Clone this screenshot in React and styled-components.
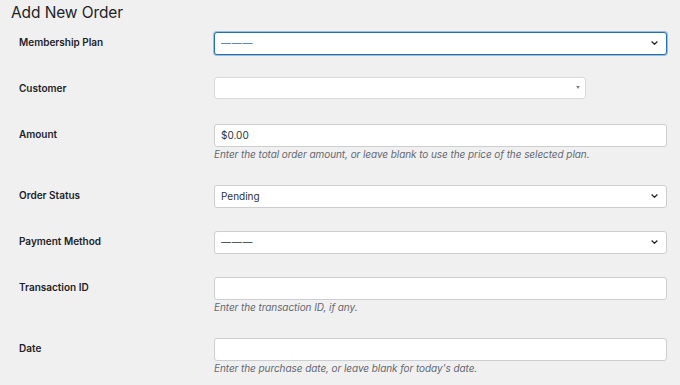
import styled, { createGlobalStyle } from "styled-components";

const GlobalStyle = createGlobalStyle`
  body {
    margin: 0;
    background: #f0f0f1;
    font-family: Inter, "Noto Sans", sans-serif;
    color: #1d2327;
  }
`;

const Wrap = styled.div`
  padding: 6px 0 0 11px;
  width: 680px;
  box-sizing: border-box;
`;

const Title = styled.h1`
  margin: 0;
  font-size: 15.5px;
  line-height: 14px;
  font-weight: 400;
  letter-spacing: -0.1px;
  color: #1d2327;
`;

const Form = styled.div`
  padding-left: 8px;
`;

const Row = styled.div`
  display: grid;
  grid-template-columns: 195px 453px;
  padding: 11px 0 12px;
`;

const Label = styled.label`
  font-size: 10px;
  font-weight: 600;
  line-height: 23px;
  color: #1d2327;
`;

const Field = styled.div`
  display: flex;
  flex-direction: column;
  align-items: flex-start;
`;

const Box = styled.div`
  position: relative;
  width: ${(p) => p.$width || 453}px;
  height: 23px;
`;

const TextInput = styled.input`
  box-sizing: border-box;
  width: 100%;
  height: 23px;
  margin: 0;
  padding: 0 6px;
  border: 1px solid #cdced1;
  border-radius: 3px;
  background: #fff;
  font: 400 10px Inter, "Noto Sans", sans-serif;
  color: #2c3338;
  outline: none;
`;

const Select = styled.select`
  box-sizing: border-box;
  width: 100%;
  height: 23px;
  margin: 0;
  padding: 0 20px 0 6px;
  appearance: none;
  border: 1px solid ${(p) => (p.$focus ? "#2271b1" : "#cdced1")};
  box-shadow: ${(p) => (p.$focus ? "0 0 0 1px rgba(34,113,177,0.4)" : "none")};
  border-radius: 3px;
  background: #fff;
  font: 400 10px Inter, "Noto Sans", sans-serif;
  letter-spacing: ${(p) => (p.$dashes ? "0.8px" : "0")};
  color: ${(p) => (p.$focus ? "#3e6a9a" : "#2c3338")};
  outline: none;
`;

const Chevron = styled.svg`
  position: absolute;
  right: 9px;
  top: 10px;
  pointer-events: none;
`;

const Combo = styled.div`
  box-sizing: border-box;
  width: 100%;
  height: 22px;
  border: 1px solid #d8d9db;
  border-radius: 3px;
  background: #fff;
`;

const Caret = styled.span`
  position: absolute;
  right: 6px;
  top: 9px;
  width: 0;
  height: 0;
  border-left: 2.5px solid transparent;
  border-right: 2.5px solid transparent;
  border-top: 3.5px solid #888;
`;

const Hint = styled.p`
  margin: 2px 0 0;
  font-size: 10px;
  line-height: 13px;
  letter-spacing: -0.07px;
  font-style: italic;
  color: #646970;
`;

function DropSelect({ value, focus }) {
  return (
    <Box>
      <Select $focus={focus} $dashes={value === "———"} defaultValue={value}>
        <option>{value}</option>
      </Select>
      <Chevron width="7" height="4" viewBox="0 0 7 4">
        <path d="M0.6 0.5 L3.5 3.3 L6.4 0.5" fill="none" stroke="#1d2327" strokeWidth="1.2" />
      </Chevron>
    </Box>
  );
}

function Text({ value }) {
  return (
    <Box>
      <TextInput type="text" defaultValue={value} />
    </Box>
  );
}

export default function App() {
  return (
    <>
      <GlobalStyle />
      <Wrap>
        <Title>Add New Order</Title>
        <Form>
          <Row>
            <Label>Membership Plan</Label>
            <Field>
              <DropSelect value="———" focus />
            </Field>
          </Row>
          <Row>
            <Label>Customer</Label>
            <Field>
              <Box $width={372}>
                <Combo />
                <Caret />
              </Box>
            </Field>
          </Row>
          <Row>
            <Label>Amount</Label>
            <Field>
              <Text value="$0.00" />
              <Hint>Enter the total order amount, or leave blank to use the price of the selected plan.</Hint>
            </Field>
          </Row>
          <Row>
            <Label>Order Status</Label>
            <Field>
              <DropSelect value="Pending" />
            </Field>
          </Row>
          <Row>
            <Label>Payment Method</Label>
            <Field>
              <DropSelect value="———" />
            </Field>
          </Row>
          <Row>
            <Label>Transaction ID</Label>
            <Field>
              <Text value="" />
              <Hint>Enter the transaction ID, if any.</Hint>
            </Field>
          </Row>
          <Row>
            <Label>Date</Label>
            <Field>
              <Text value="" />
              <Hint>Enter the purchase date, or leave blank for today's date.</Hint>
            </Field>
          </Row>
        </Form>
      </Wrap>
    </>
  );
}
